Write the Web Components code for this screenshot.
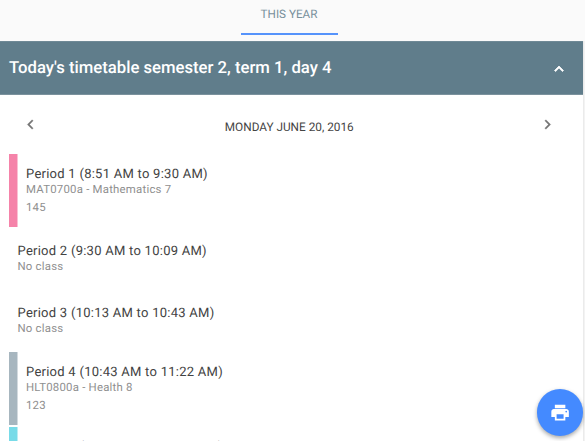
<!DOCTYPE html>
<html lang="en"><head><meta charset="utf-8"><title>Timetable</title>
<style>html,body{margin:0;height:441px;overflow:hidden;background:#fafafa;font-family:Roboto,sans-serif;text-rendering:geometricPrecision}</style></head>
<body>
<timetable-app></timetable-app>
<script>
const define=(name,html)=>customElements.define(name,class extends HTMLElement{
  constructor(){super();const t=document.createElement('template');t.innerHTML=html;this.attachShadow({mode:'open'}).append(t.content.cloneNode(true));}
});
define('year-tab',`<style>:host{display:block;width:97px;height:35px;box-sizing:border-box;border-bottom:2px solid #5593fb;text-align:center;font-size:11.7px;line-height:29px;color:#78909c;white-space:nowrap}</style><slot></slot>`);
define('panel-header',`<style>:host{display:flex;align-items:center;justify-content:space-between;height:54px;box-sizing:border-box;padding:1px 14.5px 0 9px;background:#607d8b;border-top:1px solid #6f8996;border-bottom:1px solid #7b929d;color:#fff;font-size:16.7px;font-weight:500}
svg{display:block;width:18px;height:18px}</style><slot></slot><svg viewBox="0 0 24 24" fill="currentColor"><path d="M12 8l-6 6 1.41 1.41L12 10.83l4.59 4.58L18 14z" stroke="currentColor" stroke-width="1"/></svg>`);
define('date-nav',`<style>:host{display:flex;justify-content:space-between;height:59px;box-sizing:border-box;padding:20px 25px 0 21px;color:#757575}
svg{display:block;width:19px;height:19px}.date{font-size:11.8px;line-height:25px;color:#444}</style>
<svg viewBox="0 0 24 24" fill="currentColor"><path d="M15.41 7.41L14 6l-6 6 6 6 1.41-1.41L10.83 12z" stroke="currentColor" stroke-width=".4"/></svg><span class="date"><slot></slot></span><svg viewBox="0 0 24 24" fill="currentColor"><path d="M10 6L8.59 7.41 13.17 12l-4.58 4.59L10 18l6-6z" stroke="currentColor" stroke-width=".4"/></svg>`);
define('period-row',`<style>:host{display:block;box-sizing:border-box;height:61.5px;margin-left:9px;padding:13px 0 0 8.5px;white-space:nowrap;color:#424242}
:host([booked]){height:73px;padding:11px 0 0 9px;border-left:8px solid var(--bar);box-shadow:inset .5px 0 0 var(--bar);margin-bottom:2px}
.t{font-size:13px;line-height:19px;letter-spacing:.26px}
.s,.r{font-size:11.4px;line-height:17px;letter-spacing:.22px;color:#8f8f8f}.s{margin-top:-3px}.r{line-height:19px}</style>
<div class="t"><slot></slot></div><div class="s"><slot name="subject"></slot></div><div class="r"><slot name="room"></slot></div>`);
define('print-button',`<style>:host{position:absolute;left:536.7px;top:389.2px;width:46.5px;height:46.5px;border-radius:50%;background:#448aff;display:flex;align-items:center;justify-content:center;color:#fff;box-shadow:0 2px 4px rgba(0,0,0,.35)}
svg{width:21px;height:21px;padding-left:.6px}</style><svg viewBox="0 0 24 24" fill="currentColor"><path d="M19 8H5c-1.66 0-3 1.34-3 3v6h4v4h12v-4h4v-6c0-1.66-1.34-3-3-3zm-3 11H8v-5h8v5zm3-7c-.55 0-1-.45-1-1s.45-1 1-1 1 .45 1 1-.45 1-1 1zm-1-9H6v4h12V3z"/></svg>`);
define('timetable-app',`<style>:host{display:block;position:relative;width:585px;height:441px;overflow:hidden}
nav{height:41px;padding-left:240.5px;box-sizing:border-box}
section{width:582.5px;height:400px;background:#fff;box-shadow:1.5px 0 0 #ebebeb}</style>
<nav><year-tab>THIS YEAR</year-tab></nav>
<section><panel-header>Today's timetable semester 2, term 1, day 4</panel-header>
<date-nav>MONDAY JUNE 20, 2016</date-nav>
<period-row booked style="--bar:#f583a9">Period 1 (8:51 AM to 9:30 AM)<span slot="subject">MAT0700a - Mathematics 7</span><span slot="room">145</span></period-row>
<period-row>Period 2 (9:30 AM to 10:09 AM)<span slot="subject">No class</span></period-row>
<period-row>Period 3 (10:13 AM to 10:43 AM)<span slot="subject">No class</span></period-row>
<period-row booked style="--bar:#a7b6bf">Period 4 (10:43 AM to 11:22 AM)<span slot="subject">HLT0800a - Health 8</span><span slot="room">123</span></period-row>
<period-row booked style="--bar:#78dbe8">Period 5 (11:22 AM to 12:01 PM)</period-row>
</section><print-button></print-button>`);
</script></body></html>
